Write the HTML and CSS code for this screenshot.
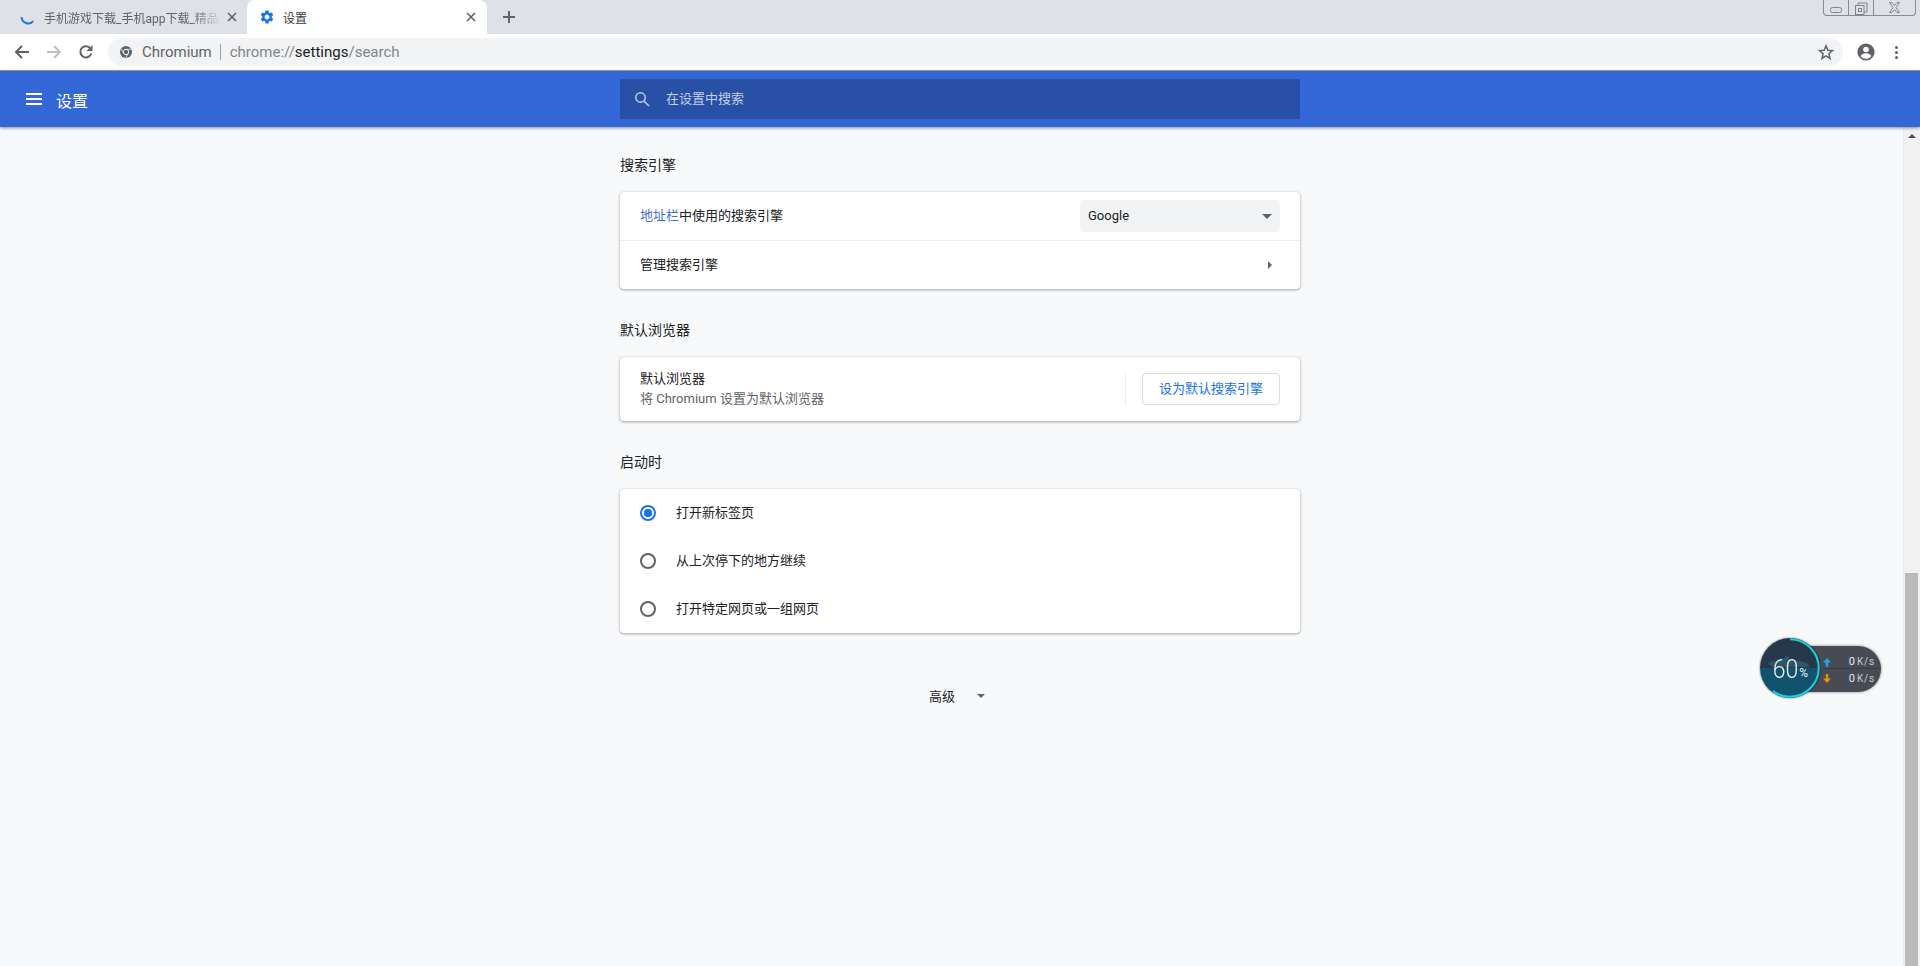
FILE: index.html
```html
<!DOCTYPE html>
<html lang="zh-CN">
<head>
<meta charset="utf-8">
<title>设置</title>
<link rel="stylesheet" href="styles.css">
</head>
<body>
<div class="browser">
  <div class="tabstrip">
    <div class="tab tab-inactive">
      <svg class="spinner" width="16" height="16" viewBox="0 0 16 16"><path d="M1.600 8a6.600 6.600 0 0 0 11.600 4.100" fill="none" stroke="#1a73e8" stroke-width="2"/></svg>
      <span class="tab-title tab-title-fade">手机游戏下载_手机app下载_精品</span>
      <svg class="tab-close" width="10" height="10" viewBox="0 0 10 10"><path d="M1 1l8 8M9 1l-8 8" stroke="#5f6368" stroke-width="1.600"/></svg>
    </div>
    <div class="tab tab-active">
      <svg class="gear" width="16" height="16" viewBox="0 0 24 24"><path fill="#1a73e8" d="M19.140 12.940c.04-.3.06-.61.06-.94 0-.32-.02-.64-.07-.94l2.030-1.580c.18-.14.23-.41.12-.61l-1.920-3.320c-.12-.22-.37-.29-.59-.22l-2.390.96c-.5-.38-1.030-.7-1.620-.94l-.36-2.540c-.04-.24-.24-.41-.48-.41h-3.840c-.24 0-.43.17-.47.41l-.36 2.540c-.59.24-1.130.57-1.620.94l-2.390-.96c-.22-.08-.47 0-.59.22L2.740 8.870c-.12.21-.08.47.12.61l2.030 1.580c-.05.3-.09.63-.09.94s.02.64.07.94l-2.030 1.580c-.18.14-.23.41-.12.61l1.920 3.320c.12.22.37.29.59.22l2.390-.96c.5.38 1.030.7 1.620.94l.36 2.540c.05.24.24.41.48.41h3.840c.24 0 .44-.17.47-.41l.36-2.540c.59-.24 1.130-.56 1.620-.94l2.390.96c.22.08.47 0 .59-.22l1.920-3.320c.12-.22.07-.47-.12-.61l-2.010-1.580zM12 15.600c-1.980 0-3.600-1.620-3.600-3.600s1.620-3.600 3.600-3.600 3.600 1.620 3.600 3.600-1.620 3.600-3.600 3.600z"/></svg>
      <span class="tab-title tab-title-active">设置</span>
      <svg class="tab-close" width="10" height="10" viewBox="0 0 10 10"><path d="M1 1l8 8M9 1l-8 8" stroke="#5f6368" stroke-width="1.600"/></svg>
    </div>
    <svg class="newtab" width="12" height="12" viewBox="0 0 12 12"><path d="M6 0v12M0 6h12" stroke="#5f6368" stroke-width="2"/></svg>
    <div class="wincontrols">
      <div class="winbtn win-min"><svg width="12" height="6" viewBox="0 0 12 6"><rect x=".5" y=".5" width="11" height="5" rx="2" fill="none" stroke="#80858b"/></svg></div>
      <div class="winbtn win-max"><svg width="14" height="14" viewBox="0 0 14 14"><path d="M4 3V1h9v9h-3" fill="none" stroke="#80858b"/><rect x="1.500" y="3.500" width="8.500" height="9" fill="none" stroke="#80858b"/><rect x="4.500" y="6.500" width="3" height="3" fill="none" stroke="#80858b"/></svg></div>
      <div class="winbtn win-close"><svg width="13" height="11" viewBox="0 0 13 11"><path d="M1.500 .5h2.500l2.500 3 2.500-3h2.500L8 5.500l3.500 5H9l-2.500-3-2.500 3H1.500L5 5.500z" fill="none" stroke="#80858b"/></svg></div>
    </div>
  </div>
  <div class="toolbar">
    <svg class="navicon" width="16" height="16" viewBox="0 0 16 16"><path d="M15 8H2.500M8 2L2 8l6 6" fill="none" stroke="#5f6368" stroke-width="2"/></svg>
    <svg class="navicon" width="16" height="16" viewBox="0 0 16 16"><path d="M1 8h12.500M8 2l6 6-6 6" fill="none" stroke="#bdc1c6" stroke-width="2"/></svg>
    <svg class="navicon" width="16" height="16" viewBox="0 0 16 16"><path d="M13.300 9.500A5.600 5.600 0 1 1 12 3.900" fill="none" stroke="#5f6368" stroke-width="2"/><path d="M14.500 1v6h-6z" fill="#5f6368"/></svg>
    <div class="omnibox">
      <svg class="chromium" width="12" height="12" viewBox="0 0 12 12"><circle cx="6" cy="6" r="6" fill="#5f6368"/><circle cx="6" cy="6" r="2.700" fill="#5f6368" stroke="#f1f3f4" stroke-width="1"/><path d="M6 3.300h5.300M3.700 7.400L1.100 2.900M8.300 7.400l-2.600 4.500" stroke="#f1f3f4" stroke-width=".8"/></svg>
      <span class="chip">Chromium</span>
      <span class="sep"></span>
      <span class="url"><span class="dim">chrome://</span>settings<span class="dim">/search</span></span>
      <svg class="star" width="16" height="16" viewBox="0 0 16 16"><path d="M8 1.800l1.800 4.400 4.700.4-3.600 3.100 1.100 4.600L8 11.800l-4 2.500 1.100-4.600-3.600-3.100 4.700-.4z" fill="none" stroke="#5f6368" stroke-width="1.500"/></svg>
    </div>
    <svg class="avatar" width="18" height="18" viewBox="0 0 18 18"><circle cx="9" cy="9" r="8.600" fill="#5f6368"/><circle cx="9" cy="6.500" r="2.800" fill="#fff"/><path d="M3.600 13.200c1-2 3.400-2.900 5.400-2.900s4.400.9 5.400 2.900A6.800 6.800 0 0 1 9 15.800a6.800 6.800 0 0 1-5.400-2.600z" fill="#fff"/></svg>
    <div class="dots"><i></i><i></i><i></i></div>
  </div>
  <div class="page">
    <header class="appbar">
      <div class="appbar-left">
        <div class="burger"><i></i><i></i><i></i></div>
        <span class="appbar-title">设置</span>
      </div>
      <div class="searchbox">
        <svg width="16" height="16" viewBox="0 0 16 16"><circle cx="6.500" cy="6.500" r="4.700" fill="none" stroke="#c4d0e8" stroke-width="1.500"/><path d="M10 10l5 5" stroke="#c4d0e8" stroke-width="1.500"/></svg>
        <span class="search-ph">在设置中搜索</span>
      </div>
    </header>
    <div class="body">
      <main class="content">
        <h2 class="section-title st-first">搜索引擎</h2>
        <section class="card">
          <div class="row row-select">
            <span class="label label-up"><span class="link">地址栏</span>中使用的搜索引擎</span>
            <div class="select"><span class="select-value">Google</span><i class="caret"></i></div>
          </div>
          <div class="row row-manage">
            <span class="label label-up">管理搜索引擎</span>
            <i class="arrow"></i>
          </div>
        </section>
        <h2 class="section-title">默认浏览器</h2>
        <section class="card">
          <div class="row row-default">
            <div class="two-line">
              <span class="label">默认浏览器</span>
              <span class="secondary">将 Chromium 设置为默认浏览器</span>
            </div>
            <span class="vsep"></span>
            <div class="button">设为默认搜索引擎</div>
          </div>
        </section>
        <h2 class="section-title">启动时</h2>
        <section class="card">
          <div class="radio-row"><span class="radio radio-on"></span><span class="label label-up">打开新标签页</span></div>
          <div class="radio-row"><span class="radio"></span><span class="label label-up">从上次停下的地方继续</span></div>
          <div class="radio-row"><span class="radio"></span><span class="label label-up">打开特定网页或一组网页</span></div>
        </section>
        <div class="advanced"><span class="adv-label">高级</span><i class="caret caret-adv"></i></div>
      </main>
      <div class="scrollbar">
        <i class="scroll-up"></i>
        <div class="thumb"></div>
      </div>
    </div>
  </div>
</div>
<div class="netwidget">
  <div class="net-pill">
    <div class="net-row net-row-top"><svg width="8" height="9" viewBox="0 0 8 9"><path d="M4 0l4 4.500H5.200V9H2.800V4.500H0z" fill="#1fa5ef"/></svg><span class="net-val">0</span><span class="net-unit">K/s</span></div>
    <div class="net-row net-row-bottom"><svg width="8" height="9" viewBox="0 0 8 9"><path d="M4 9L0 4.500h2.800V0h2.400v4.500H8z" fill="#f0900c"/></svg><span class="net-val">0</span><span class="net-unit">K/s</span></div>
  </div>
  <div class="net-dial">
    <svg class="net-ring" width="60" height="60" viewBox="0 0 60 60"><path d="M8 25c6-2 10-3 14-3l5-5 3 5c8 0 14 2 18 4l2 3H16c-4 0-7-2-8-4z" fill="#2f5668"/><circle cx="30" cy="30" r="28.700" fill="none" stroke="#1ad0da" stroke-width="2" stroke-dasharray="108.200 72.100" transform="rotate(-90 30 30)"/></svg>
    <span class="net-pct"><span class="net-num">60</span><small>%</small></span>
  </div>
</div>
</body>
</html>
```
FILE: styles.css
```css
* { box-sizing: border-box; }
html, body { margin: 0; height: 100%; overflow: hidden; }
body { font-family: "Roboto", "Noto Sans CJK SC", sans-serif; font-size: 13px; color: #202124; background: #f8f9fa; }
i { display: block; }
.browser { height: 966px; display: flex; flex-direction: column; }

.tabstrip { height: 34px; background: #dee1e6; display: flex; align-items: center; position: relative; flex: none; }
.tab { height: 34px; display: flex; align-items: center; flex: none; font-size: 12px; }
.tab-inactive { width: 247px; padding: 0 10px 0 20px; }
.tab-active { width: 240px; padding: 0 11px 0 12px; background: #fff; border-radius: 8px 8px 0 0; }
.spinner { flex: none; margin-right: 8px; }
.gear { flex: none; margin-right: 8px; }
.tab-title { flex: 1; overflow: hidden; white-space: nowrap; }
.tab-title-fade { color: #5f6368; margin-right: 9px; -webkit-mask-image: linear-gradient(90deg, #000 84%, rgba(0,0,0,.15)); mask-image: linear-gradient(90deg, #000 84%, rgba(0,0,0,.15)); }
.tab-title-active { color: #3c4043; }
.tab-close { flex: none; }
.newtab { margin-left: 16px; }
.wincontrols { position: absolute; right: 4px; top: 0; width: 93px; height: 16px; display: flex; border: 1px solid #888c91; border-top: 0; border-radius: 0 0 4px 4px; }
.winbtn { display: flex; align-items: center; justify-content: center; height: 100%; }
.win-min { width: 25px; border-right: 1px solid #888c91; padding-top: 5px; }
.win-max { width: 25px; border-right: 1px solid #888c91; padding-top: 2px; }
.win-close { flex: 1; }

.toolbar { height: 37px; background: #fff; border-bottom: 1px solid #9aa0a6; display: flex; align-items: center; padding: 0 0 0 14px; flex: none; }
.navicon { flex: none; margin-right: 16px; }
.omnibox { width: 1735px; height: 28px; margin-left: -2px; background: #f1f3f4; border-radius: 14px; display: flex; align-items: center; padding: 0 9px 0 12px; flex: none; }
.chromium { flex: none; }
.chip { margin-left: 10px; color: #5f6368; font-size: 15px; }
.sep { width: 1px; height: 16px; background: #9aa0a6; margin: 0 9px 0 8px; }
.url { color: #202124; font-size: 15px; flex: 1; }
.dim { color: #80868b; }
.star { flex: none; }
.avatar { flex: none; margin-left: 14px; }
.dots { margin-left: 20px; display: flex; flex-direction: column; gap: 2px; }
.dots i { width: 3px; height: 3px; border-radius: 50%; background: #5f6368; }

.page { flex: 1; display: flex; flex-direction: column; min-height: 0; }
.appbar { height: 56px; flex: none; background: #3367d6; display: flex; align-items: center; box-shadow: 0 1px 3px rgba(60,64,67,.6); position: relative; z-index: 1; }
.appbar-left { width: 620px; flex: none; display: flex; align-items: center; padding-left: 26px; color: #fff; }
.burger { display: flex; flex-direction: column; gap: 3px; }
.burger i { width: 16px; height: 2px; background: #fff; }
.appbar-title { margin-left: 14px; font-size: 16px; color: #fff; margin-top: 2px; }
.searchbox { width: 680px; height: 40px; background: #2850a7; border-radius: 2px; display: flex; align-items: center; padding-left: 14px; }
.search-ph { margin-left: 16px; margin-top: -3px; color: #c3cfe6; font-size: 13px; }

.body { flex: 1; display: flex; min-height: 0; }
.content { flex: 1; padding: 0 0 0 620px; }
.section-title { width: 680px; margin: 31px 0 0; font-size: 14px; font-weight: 400; line-height: 20px; height: 37px; color: #202124; }
.st-first { margin-top: 28px; }
.card { width: 680px; background: #fff; border-radius: 4px; box-shadow: 0 0 1px rgba(60,64,67,.25), 0 1px 3px rgba(60,64,67,.45); }
.row { display: flex; align-items: center; padding: 0 20px; }
.row-select { height: 49px; justify-content: space-between; border-bottom: 1px solid #eceef0; }
.row-manage { height: 48px; justify-content: space-between; }
.row-default { height: 64px; }
.label { font-size: 13px; color: #202124; line-height: 20px; }
.label-up { margin-bottom: 1px; }
.link { color: #3f6fd8; }
.select { width: 200px; height: 32px; background: #f1f3f4; border-radius: 4px; display: flex; align-items: center; justify-content: space-between; padding: 0 8px; font-size: 13px; color: #202124; }
.select-value { margin-bottom: 2px; }
.caret { width: 0; height: 0; border-left: 5px solid transparent; border-right: 5px solid transparent; border-top: 5px solid #5f6368; }
.arrow { width: 0; height: 0; border-top: 4px solid transparent; border-bottom: 4px solid transparent; border-left: 4px solid #5f6368; margin-right: 8px; }
.two-line { flex: 1; display: flex; flex-direction: column; margin-top: -1px; }
.secondary { font-size: 13px; line-height: 20px; color: #5f6368; margin-bottom: -1px; }
.vsep { width: 1px; height: 32px; background: #eceef0; }
.button { margin-left: 16px; width: 138px; height: 32px; border: 1px solid #dadce0; border-radius: 4px; display: flex; align-items: center; justify-content: center; color: #1a73e8; font-size: 13px; padding-bottom: 3px; }
.radio-row { height: 48px; display: flex; align-items: center; padding-left: 20px; }
.radio { width: 16px; height: 16px; border: 2px solid #5f6368; border-radius: 50%; margin-right: 20px; flex: none; }
.radio-on { border-color: #1a73e8; background: radial-gradient(circle, #1a73e8 0 4px, #fff 4.500px); }
.advanced { width: 680px; display: flex; align-items: center; justify-content: center; margin-top: 52px; height: 20px; padding-right: 6px; }
.adv-label { font-size: 13px; color: #202124; }
.caret-adv { margin-left: 22px; margin-top: 1px; border-left-width: 4px; border-right-width: 4px; border-top-width: 4px; }

.scrollbar { width: 17px; flex: none; background: #f1f1f1; border-left: 1px solid #eaeaea; display: flex; flex-direction: column; justify-content: space-between; height: 100%; padding: 7px 2px 0 1px; }
.scroll-up { width: 0; height: 0; align-self: center; border-left: 4px solid transparent; border-right: 4px solid transparent; border-bottom: 4px solid #505050; }
.thumb { height: 393px; background: #bababa; }

.netwidget { position: absolute; left: 1760px; top: 638px; width: 121px; height: 60px; }
.net-pill { position: absolute; left: 30px; top: 8px; width: 91px; height: 46px; background: #474b54; border-radius: 0 23px 23px 0; box-shadow: 0 0 3px rgba(0,0,0,.5); padding-left: 33px; color: #c8ccd2; font-size: 10px; }
.net-row { height: 23px; display: flex; }
.net-row-top { border-bottom: 1px solid #393c44; align-items: flex-end; padding-bottom: 0; }
.net-row-bottom { align-items: flex-start; padding-top: 4px; }
.net-row svg { flex: none; margin-top: 1px; margin-bottom: 1px; }
.net-val { margin-left: 12px; color: #e8eaed; width: 12px; text-align: right; line-height: 12px; font-size: 11px; }
.net-unit { margin-left: 2px; letter-spacing: .8px; line-height: 12px; font-size: 10px; }
.net-dial { position: absolute; left: 0; top: 0; width: 60px; height: 60px; border-radius: 50%; background: linear-gradient(#26394a 0 50%, #11536c 50%); box-shadow: 0 0 2px rgba(0,0,0,.7); display: flex; align-items: center; justify-content: center; color: #e8eef2; }
.net-ring { position: absolute; left: 0; top: 0; }
.net-pct { position: relative; display: flex; align-items: flex-end; font-family: "Roboto", sans-serif; line-height: 1; margin-top: 2px; margin-left: 1px; }
.net-num { display: block; font-size: 23px; font-weight: 300; transform: scaleY(1.15); }
.net-pct small { font-size: 12px; font-weight: 400; margin-left: 1px; margin-bottom: 2px; }
```
